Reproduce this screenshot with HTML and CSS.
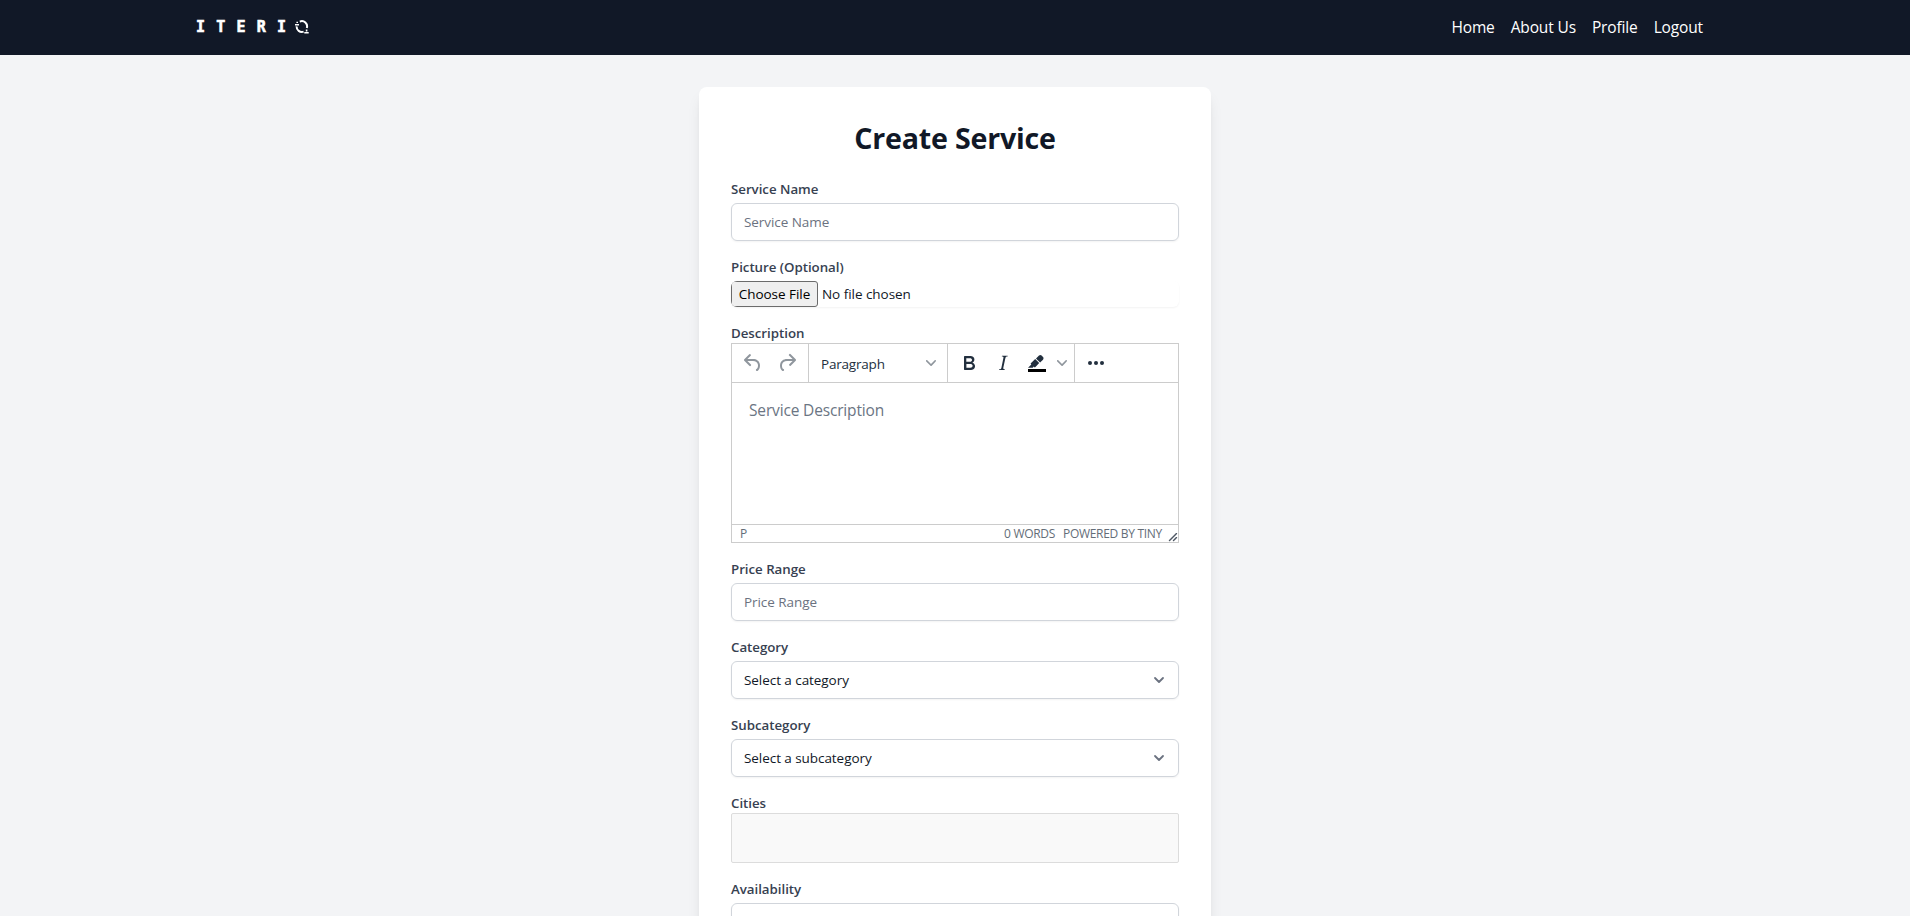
FILE: index.html
```html
<!DOCTYPE html>
<html lang="en">
<head>
<meta charset="utf-8">
<title>Create Service</title>
<link rel="stylesheet" href="styles.css">
</head>
<body>
<header class="header">
  <div class="logo"><span class="logo-text">ITERI</span>
    <svg class="logo-mark" width="14" height="14" viewBox="0 0 14 14" fill="none" stroke="#fff"><path d="M4.8 1.6A5.2 5.2 0 0 1 11.8 8" stroke-width="2"/><path d="M1.6 6.4a5.2 5.2 0 0 0 7 5.2" stroke-width="2"/><path d="M0 4.8h4M2.2 3V1.8M9.3 12.7h4.4M11.6 11.5V9.6" stroke-width="1.6"/></svg>
  </div>
  <nav class="nav"><a>Home</a><a>About Us</a><a>Profile</a><a>Logout</a></nav>
</header>
<main class="main">
  <form class="card">
    <h2 class="title">Create Service</h2>
    <div class="field gap"><label class="label">Service Name</label><div class="input muted"><span>Service Name</span></div></div>
    <div class="field gap"><label class="label">Picture (Optional)</label><div class="file"><span class="file-button">Choose File</span><span class="file-name">No file chosen</span></div></div>
    <div class="field"><label class="label">Description</label>
      <div class="editor">
        <div class="toolbar">
          <div class="group history">
            <svg width="24" height="24" viewBox="0 0 24 24" fill="#222f3e" opacity=".5"><path d="M6.4 8H12c3.7 0 6.2 2 6.8 5.1.6 2.7-.4 5.6-2.3 6.8a1 1 0 0 1-1-1.8c1.1-.6 1.8-2.7 1.4-4.6-.5-2.1-2.1-3.5-4.9-3.5H6.4l3.3 3.3a1 1 0 1 1-1.4 1.4l-5-5a1 1 0 0 1 0-1.4l5-5a1 1 0 0 1 1.4 1.4L6.4 8Z"/></svg>
            <svg width="24" height="24" viewBox="0 0 24 24" fill="#222f3e" opacity=".5"><path d="M17.6 10H12c-2.8 0-4.4 1.4-4.9 3.5-.4 2 .3 4 1.4 4.6a1 1 0 1 1-1 1.8c-2-1.2-2.9-4.1-2.3-6.8.6-3 3-5.1 6.8-5.1h5.6l-3.3-3.3a1 1 0 1 1 1.4-1.4l5 5a1 1 0 0 1 0 1.4l-5 5a1 1 0 0 1-1.4-1.4l3.3-3.3Z"/></svg>
          </div>
          <div class="group block"><span class="paragraph">Paragraph</span><svg class="chev" width="10" height="10" viewBox="0 0 10 10" fill="#222f3e"><path d="M8.7 2.2c.3-.3.8-.3 1 0 .4.4.4.9 0 1.2L5.7 7.8c-.3.3-.9.3-1.2 0L.2 3.4a.8.8 0 0 1 0-1.2c.3-.3.8-.3 1.1 0L5 6l3.7-3.8Z"/></svg></div>
          <div class="group format">
            <svg width="24" height="24" viewBox="0 0 24 24" fill="#222f3e"><path fill-rule="evenodd" d="M7.8 19c-.3 0-.5 0-.6-.2l-.2-.5V5.7c0-.2 0-.4.2-.5l.6-.2h5c1.5 0 2.7.3 3.5 1 .7.6 1.1 1.4 1.1 2.5a3 3 0 0 1-.6 1.9c-.4.6-1 1-1.6 1.2.4.1.9.3 1.3.6s.8.7 1 1.2c.4.4.5 1 .5 1.6 0 1.3-.4 2.3-1.3 3-.8.7-2.1 1-3.8 1H7.8Zm5-8.3c.6 0 1.2-.1 1.6-.5.4-.3.6-.7.6-1.3 0-1.1-.8-1.7-2.3-1.7H9.3v3.5h3.4Zm.5 6c.7 0 1.3-.1 1.7-.4.4-.4.6-.9.6-1.5s-.2-1-.7-1.4c-.4-.3-1-.4-2-.4H9.4v3.8h4Z"/></svg>
            <svg width="24" height="24" viewBox="0 0 24 24" fill="#222f3e"><path fill-rule="evenodd" d="m16.7 4.7-.1.9h-.3c-.6 0-1 0-1.4.3-.3.3-.4.6-.5 1.1l-2.1 9.8v.6c0 .5.4.8 1.4.8h.2l-.2.8H8l.2-.8h.2c1.1 0 1.8-.5 2-1.5l2-9.8.1-.5c0-.6-.4-.8-1.4-.8h-.3l.2-.9h5.8Z"/></svg>
            <svg width="24" height="24" viewBox="0 0 24 24" fill="#222f3e"><path fill="#000" d="M3 18h18v3H3z"/><path fill-rule="evenodd" d="M7.7 16.7H3l3.3-3.3-.7-.8L10.2 8l4 4.1-4 4.2c-.2.2-.6.2-.8 0l-.6-.7-1.1 1.1zm5-7.5L11 7.4l3-2.9a2 2 0 0 1 2.6 0L18 6c.7.7.7 2 0 2.7l-2.9 2.9-1.8-1.8-.5-.6"/></svg>
            <svg class="chev" width="10" height="10" viewBox="0 0 10 10" fill="#222f3e"><path d="M8.7 2.2c.3-.3.8-.3 1 0 .4.4.4.9 0 1.2L5.7 7.8c-.3.3-.9.3-1.2 0L.2 3.4a.8.8 0 0 1 0-1.2c.3-.3.8-.3 1.1 0L5 6l3.7-3.8Z"/></svg>
          </div>
          <div class="group more"><svg width="24" height="24" viewBox="0 0 24 24" fill="#222f3e"><circle cx="6" cy="12" r="2"/><circle cx="12" cy="12" r="2"/><circle cx="18" cy="12" r="2"/></svg></div>
        </div>
        <div class="edit-area"><span>Service Description</span></div>
        <div class="status"><span>P</span><span class="words">0 WORDS</span><span class="powered">POWERED BY TINY</span><svg class="resize" width="10" height="10" viewBox="0 0 10 10" fill="#222f3e" opacity=".8"><path d="M8.1 1.1A.5.5 0 1 1 9 2L2 9A.5.5 0 1 1 1 8l7-7ZM8.1 5.1A.5.5 0 1 1 9 6L6 9A.5.5 0 1 1 5 8l3-3Z"/></svg></div>
      </div>
    </div>
    <div class="field gap"><label class="label">Price Range</label><div class="input muted"><span>Price Range</span></div></div>
    <div class="field gap"><label class="label">Category</label><div class="input"><span>Select a category</span><svg class="arrow" width="20" height="20" viewBox="0 0 20 20" fill="none" stroke="#6b7280" stroke-width="1.8" stroke-linecap="round" stroke-linejoin="round"><path d="M6 8l4 4 4-4"/></svg></div></div>
    <div class="field gap"><label class="label">Subcategory</label><div class="input"><span>Select a subcategory</span><svg class="arrow" width="20" height="20" viewBox="0 0 20 20" fill="none" stroke="#6b7280" stroke-width="1.8" stroke-linecap="round" stroke-linejoin="round"><path d="M6 8l4 4 4-4"/></svg></div></div>
    <div class="field"><label class="label">Cities</label><div class="cities"></div></div>
    <div class="field gap"><label class="label">Availability</label><div class="input"></div></div>
  </form>
</main>
</body>
</html>
```
FILE: styles.css
```css
* { box-sizing: border-box; }
body { margin: 0; height: 916px; overflow: hidden; background: #f3f4f6; color: #111827; font-family: "Segoe UI", "Open Sans", "Noto Sans", sans-serif; font-size: 13.5px; line-height: 20px; }
svg { display: block; flex: none; }
.header { height: 55px; background: #111827; color: #fff; display: flex; align-items: center; justify-content: space-between; padding: 0 207px 0 196px; }
.logo { display: flex; align-items: center; padding-bottom: 1px; }
.logo-text { font: bold 15px/20px "DejaVu Sans Mono", monospace; letter-spacing: 11.2px; -webkit-text-stroke: .6px #fff; }
.logo-mark { margin-left: -2px; }
.nav { display: flex; gap: 16px; padding-bottom: 1px; font-size: 15.5px; line-height: 24px; letter-spacing: -.14px; }
.nav a { white-space: nowrap; }
.main { height: 861px; overflow: hidden; padding-top: 32px; display: flex; justify-content: center; align-items: flex-start; }
.card { width: 512px; padding: 32px; background: #fff; border-radius: 8px; box-shadow: 0 10px 15px -3px rgba(0,0,0,.1), 0 4px 6px -4px rgba(0,0,0,.1); display: flex; flex-direction: column; gap: 16px; }
.title { margin: 0 0 8px; padding-top: 1px; height: 36px; font-size: 28.6px; line-height: 36px; font-weight: 700; letter-spacing: -.2px; text-align: center; white-space: nowrap; }
.field { display: flex; flex-direction: column; }
.field.gap { gap: 4px; }
.label { font-weight: 600; font-size: 13.3px; letter-spacing: -.03px; color: #374151; white-space: nowrap; }
.input { height: 38px; border: 1px solid #d1d5db; border-radius: 6px; padding: 0 9px 0 12px; display: flex; align-items: center; justify-content: space-between; box-shadow: 0 1px 2px rgba(0,0,0,.05); letter-spacing: -.06px; white-space: nowrap; }
.muted { color: #6b7280; }
.file { height: 26px; display: flex; align-items: center; border-radius: 6px; box-shadow: 0 1px 2px rgba(0,0,0,.05); overflow: hidden; letter-spacing: -.04px; }
.file-button { width: 87px; height: 26px; line-height: 24px; border: 1px solid #6b6b6b; border-radius: 3px; background: #efefef; color: #000; text-align: center; }
.file-name { margin-left: 4px; }
.editor { height: 200px; border: 1px solid #ccc; display: flex; flex-direction: column; color: #222f3e; }
.toolbar { height: 39px; border-bottom: 1px solid #ccc; display: flex; }
.group { display: flex; align-items: center; border-right: 1px solid #ccc; }
.history { width: 77px; padding-left: 9px; gap: 10px; }
.block { width: 139px; padding: 0 11px 0 12px; justify-content: space-between; }
.paragraph { padding-top: 2px; letter-spacing: -.2px; }
.format { width: 127px; padding-left: 9px; gap: 10px; }
.format .chev { margin-left: -2px; }
.more { border: 0; padding-left: 9px; }
.chev { opacity: .5; }
.edit-area { flex: 1; padding: 16px 17px; font-size: 15.5px; line-height: 23px; letter-spacing: -.16px; color: #6b7583; }
.status { height: 18px; border-top: 1px solid #ccc; display: flex; align-items: center; padding: 1px 0 0 8px; font-size: 12px; line-height: 16px; letter-spacing: -.3px; color: #646d78; white-space: nowrap; }
.words { margin-left: auto; }
.powered { margin: 0 6px 0 8px; }
.resize { align-self: flex-end; }
.cities { height: 50px; border: 1px solid #dcdcdc; border-radius: 2px; background: #f9f9f9; }
```
